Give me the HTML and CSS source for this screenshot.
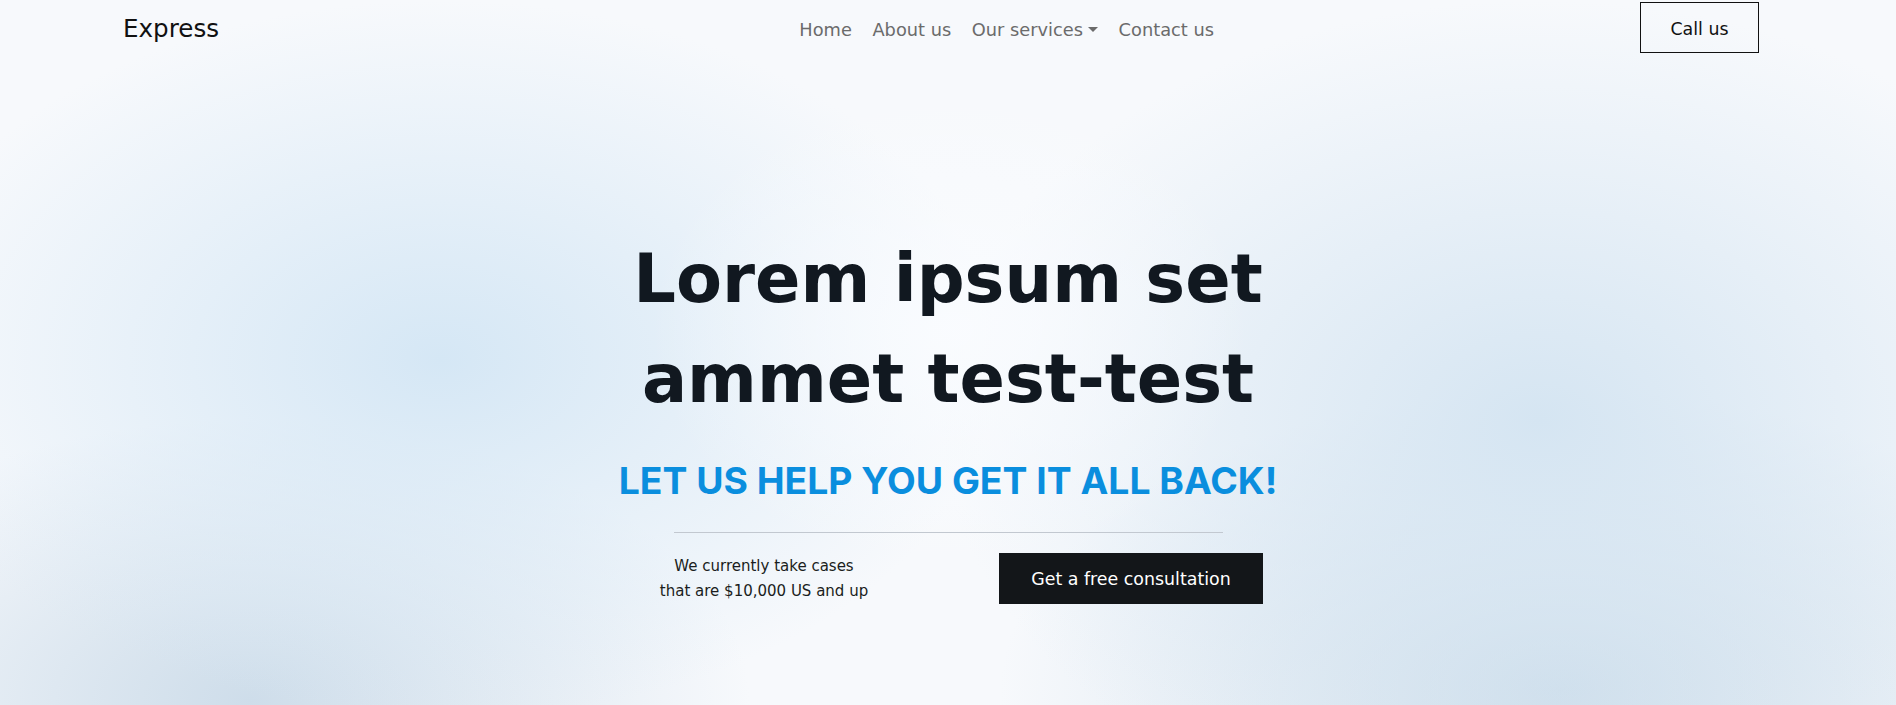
FILE: index.html
```html
<!DOCTYPE html>
<html lang="en">
<head>
<meta charset="utf-8">
<title>Express</title>
<link rel="stylesheet" href="styles.css">
</head>
<body>
<header class="navbar">
  <a class="brand" href="#">Express</a>
  <nav class="nav">
    <a class="nav-link" href="#">Home</a>
    <a class="nav-link" href="#">About us</a>
    <a class="nav-link dropdown" href="#">Our services</a>
    <a class="nav-link" href="#">Contact us</a>
  </nav>
  <a class="btn-outline" href="#">Call us</a>
</header>
<main class="hero">
  <h1 class="hero-title">Lorem ipsum set<br>ammet test-test</h1>
  <h2 class="hero-sub">LET US HELP YOU GET IT ALL BACK!</h2>
  <hr class="divider">
  <div class="hero-row">
    <p class="hero-note">We currently take cases<br>that are $10,000 US and up</p>
    <a class="btn-dark" href="#">Get a free consultation</a>
  </div>
</main>
</body>
</html>
```
FILE: styles.css
```css
* { box-sizing: border-box; }
html, body { margin: 0; height: 100%; }
body {
  font-family: "DejaVu Sans", sans-serif;
  color: #131619;
  min-height: 705px;
  background-color: #f7f9fc;
  background-image:
    radial-gradient(ellipse 300px 240px at 950px 330px, rgba(250,252,255,0.9), rgba(250,252,255,0) 100%),
    radial-gradient(ellipse 560px 360px at 440px 360px, rgba(213,231,245,1), rgba(213,231,245,0) 100%),
    radial-gradient(ellipse 500px 280px at 250px 700px, rgba(206,221,234,1), rgba(206,221,234,0) 100%),
    radial-gradient(ellipse 600px 420px at 1540px 420px, rgba(213,229,242,1), rgba(213,229,242,0) 100%),
    radial-gradient(ellipse 560px 300px at 1560px 690px, rgba(205,221,234,1), rgba(205,221,234,0) 100%);
  background-repeat: no-repeat;
}
a { text-decoration: none; }

.navbar {
  display: flex;
  align-items: center;
  height: 55px;
  padding: 0 137px 0 123px;
}
.brand {
  font-size: 24.6px;
  color: #111;
  padding-top: 1px;
}
.nav {
  display: flex;
  margin-left: 570px;
  padding-top: 3px;
}
.nav-link {
  font-size: 17.8px;
  color: #6b6b6b;
  padding: 0 10.3px;
}
.dropdown::after {
  content: "";
  display: inline-block;
  margin-left: 5px;
  vertical-align: 4px;
  border-top: 5px solid #6b6b6b;
  border-left: 5px solid transparent;
  border-right: 5px solid transparent;
}
.btn-outline {
  margin-left: auto;
  width: 119px;
  height: 51px;
  display: flex;
  align-items: center;
  justify-content: center;
  padding-top: 3px;
  border: 1px solid #111;
  color: #111;
  font-size: 17.4px;
}

.hero {
  display: flex;
  flex-direction: column;
  align-items: center;
  padding-top: 174px;
}
.hero-title {
  margin: 0;
  font-size: 67px;
  font-weight: 700;
  line-height: 100px;
  text-align: center;
  color: #111820;
}
.hero-sub {
  margin: 30px 0 0;
  font-family: Inter, "DejaVu Sans", sans-serif;
  font-size: 37.3px;
  font-weight: 700;
  line-height: 44px;
  color: #0a8ede;
}
.divider {
  margin: 29px 0 0;
  width: 549px;
  border: 0;
  height: 1px;
  background: #c2c8d0;
}
.hero-row {
  display: flex;
  align-items: center;
  margin-top: 20px;
  gap: 104px;
}
.hero-note {
  margin: 0;
  width: 262px;
  text-align: center;
  font-size: 15px;
  line-height: 24.4px;
  color: #1a1d20;
}
.btn-dark {
  width: 264px;
  height: 51px;
  display: flex;
  align-items: center;
  justify-content: center;
  background: #131619;
  color: #fff;
  font-size: 17.4px;
}
```
